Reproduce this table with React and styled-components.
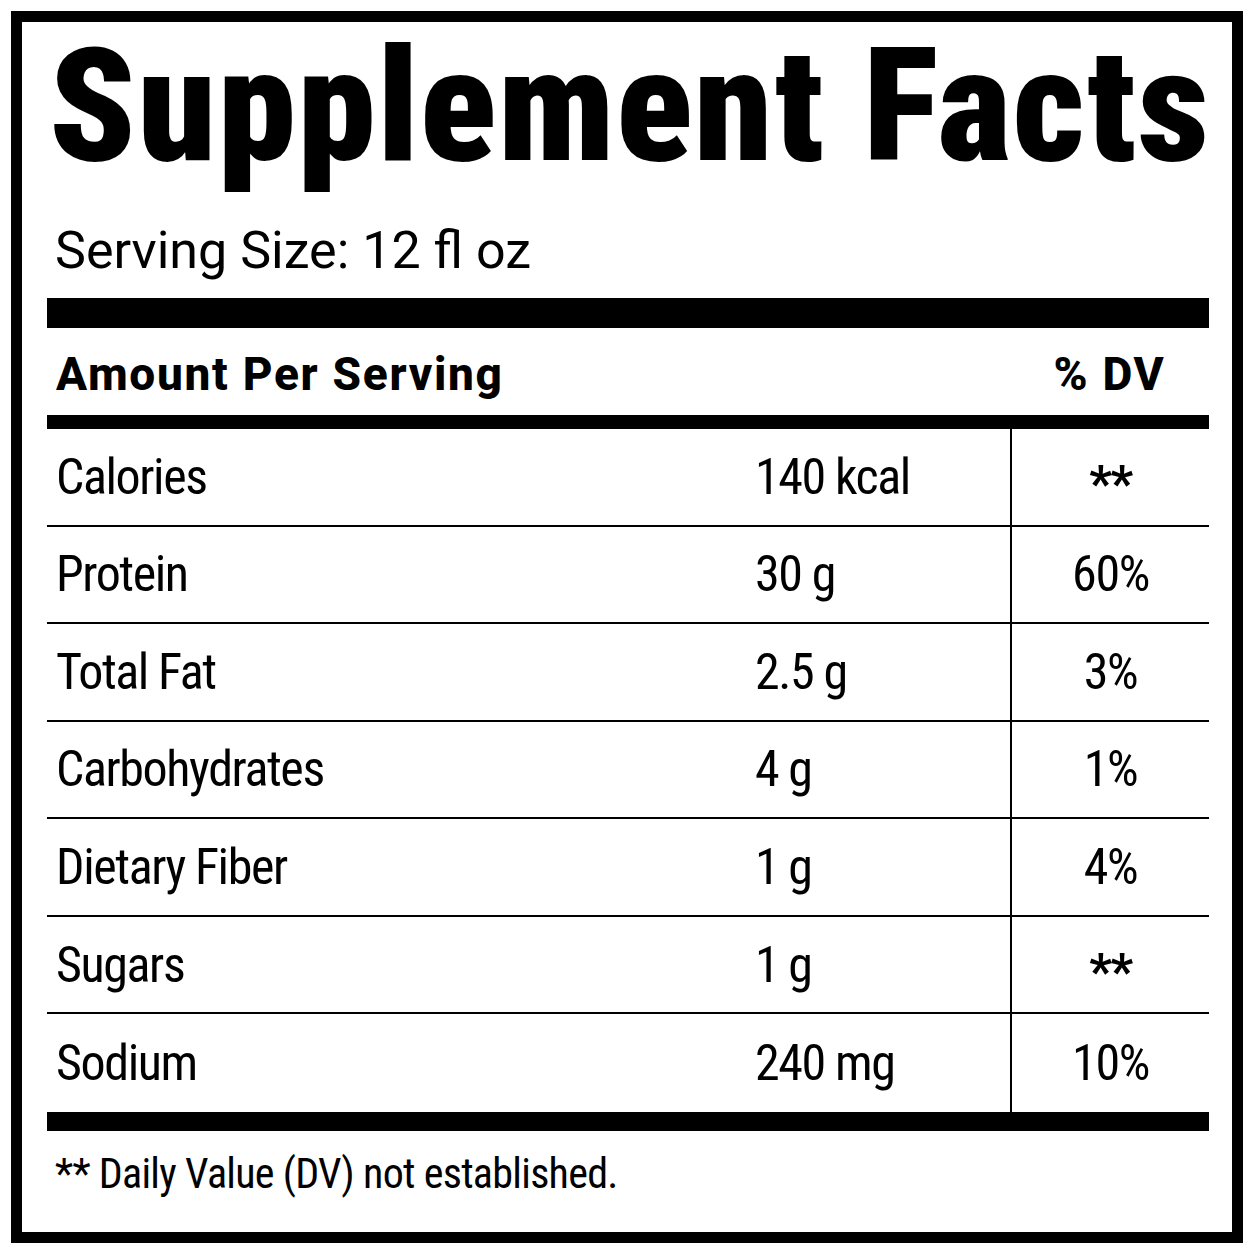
import React from "react";
import styled, { createGlobalStyle } from "styled-components";

const FONT = `Roboto, "Liberation Sans", Arial, sans-serif`;

const nutrients = [
  { name: "Calories", amount: "140 kcal", dv: "**" },
  { name: "Protein", amount: "30 g", dv: "60%" },
  { name: "Total Fat", amount: "2.5 g", dv: "3%" },
  { name: "Carbohydrates", amount: "4 g", dv: "1%" },
  { name: "Dietary Fiber", amount: "1 g", dv: "4%" },
  { name: "Sugars", amount: "1 g", dv: "**" },
  { name: "Sodium", amount: "240 mg", dv: "10%" },
];

function App() {
  return (
    <>
      <GlobalStyle />
      <Page>
        <Label>
          <Title>Supplement Facts</Title>
          <Serving>Serving Size: 12 fl oz</Serving>
          <Rule $h={30} $mt={21} />
          <HeaderRow>
            <HeaderText>Amount Per Serving</HeaderText>
            <span />
            <HeaderText $center>% DV</HeaderText>
          </HeaderRow>
          <Rule $h={14} />
          <Rows>
            {nutrients.map((n) => (
              <Row key={n.name}>
                <Name>{n.name}</Name>
                <Amount>{n.amount}</Amount>
                <Dv $stars={n.dv === "**"}>{n.dv}</Dv>
              </Row>
            ))}
          </Rows>
          <Rule $h={19} />
          <Footnote>** Daily Value (DV) not established.</Footnote>
        </Label>
      </Page>
    </>
  );
}

export default App;

const GlobalStyle = createGlobalStyle`
  html, body {
    margin: 0;
    padding: 0;
    background: #fff;
  }
  body {
    font-family: ${FONT};
    color: #000;
  }
`;

const Page = styled.div`
  width: 1254px;
  box-sizing: border-box;
  padding: 11px;
`;

const Label = styled.section`
  box-sizing: border-box;
  width: 1232px;
  height: 1232px;
  border: 11px solid #000;
  padding: 0 23px 0 25px;
  display: flex;
  flex-direction: column;
`;

const Title = styled.h1`
  margin: 5px 0 0;
  padding-left: 2px;
  font-family: ${FONT};
  font-weight: 900;
  font-stretch: 78%;
  font-size: 158px;
  line-height: 158px;
  letter-spacing: 1.6px;
  white-space: nowrap;
`;

const Serving = styled.div`
  margin-top: 40px;
  padding-left: 8px;
  font-stretch: 92%;
  font-size: 52px;
  line-height: 52px;
`;

const Rule = styled.div`
  height: ${(p) => p.$h}px;
  margin-top: ${(p) => p.$mt || 0}px;
  background: #000;
  flex-shrink: 0;
`;

const grid = `
  display: grid;
  grid-template-columns: 699px 264px 199px;
`;

const HeaderRow = styled.div`
  ${grid};
  height: 87px;
  align-items: center;
`;

const HeaderText = styled.span`
  font-weight: 800;
  font-stretch: 100%;
  font-size: 46px;
  line-height: 1;
  letter-spacing: 1.7px;
  padding-left: ${(p) => (p.$center ? 0 : 9)}px;
  padding-top: 4px;
  text-align: ${(p) => (p.$center ? "center" : "left")};
`;

const Rows = styled.div`
  display: flex;
  flex-direction: column;
`;

const Row = styled.div`
  ${grid};
  box-sizing: border-box;
  height: 97.57px;
  border-bottom: 2px solid #000;

  &:last-child {
    border-bottom: none;
  }
`;

const Cell = styled.div`
  display: flex;
  align-items: center;
  font-stretch: 75%;
  font-size: 50px;
  line-height: 1;
  letter-spacing: -1.4px;
`;

const Name = styled(Cell)`
  padding-left: 9px;
`;

const Amount = styled(Cell)`
  padding-left: 9px;
`;

const Dv = styled(Cell)`
  justify-content: center;
  border-left: 2px solid #000;
  font-weight: ${(p) => (p.$stars ? 700 : 400)};
  padding-top: ${(p) => (p.$stars ? 14 : 0)}px;
`;

const Footnote = styled.p`
  margin: 22px 0 0;
  padding-left: 8px;
  font-stretch: 75%;
  font-size: 42px;
  line-height: 1;
  letter-spacing: -0.7px;
`;
